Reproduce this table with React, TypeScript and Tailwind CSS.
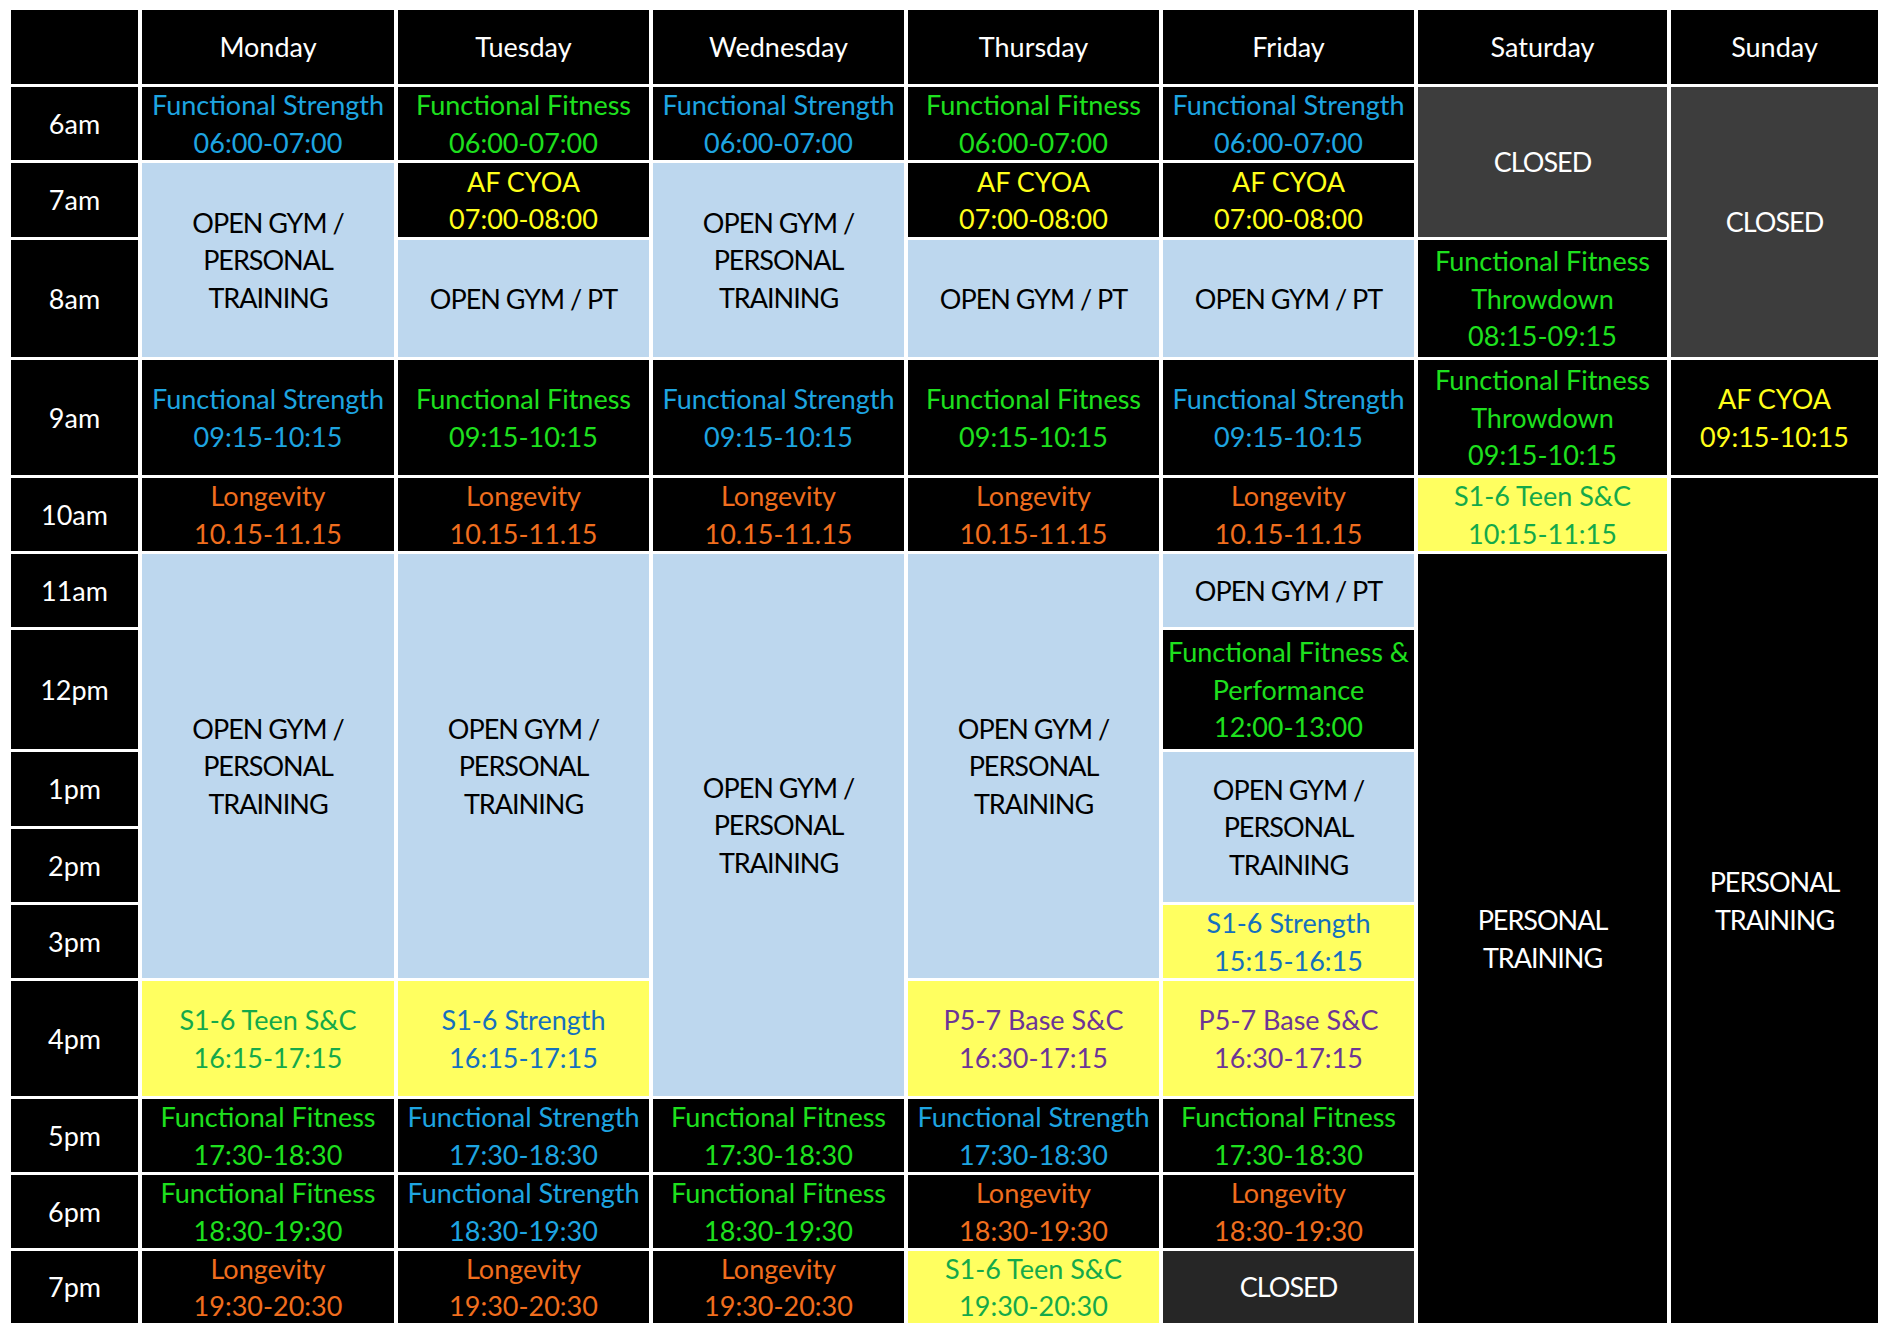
import React from "react";

type Cell = { pos: string; bg: string; fg: string; lines: string[] };

const BLK = "bg-black";
const BLUE = "bg-[#BDD7EE]";
const YEL = "bg-[#FFFF60]";
const GRAY = "bg-[#3D3D3D]";
const DARK = "bg-[#262626]";

const FS = "text-[#1EA5E1]";
const FF = "text-[#1EE01E]";
const LG = "text-[#F06E1E]";
const AF = "text-[#FFFF1A]";
const TEEN = "text-[#14A94A]";
const STR = "text-[#1570BE]";
const BASE = "text-[#6C3596]";
const WH = "text-white";
const BK = "text-black";

const OGPT = ["OPEN GYM /", "PERSONAL", "TRAINING"];
const OGPT_SHORT = ["OPEN GYM / PT"];

const cells: Cell[] = [
  // Monday
  { pos: "col-start-2 row-start-2", bg: BLK, fg: FS, lines: ["Functional Strength", "06:00-07:00"] },
  { pos: "col-start-2 row-start-3 row-span-2", bg: BLUE, fg: BK, lines: OGPT },
  { pos: "col-start-2 row-start-5", bg: BLK, fg: FS, lines: ["Functional Strength", "09:15-10:15"] },
  { pos: "col-start-2 row-start-6", bg: BLK, fg: LG, lines: ["Longevity", "10.15-11.15"] },
  { pos: "col-start-2 row-start-7 row-span-5", bg: BLUE, fg: BK, lines: OGPT },
  { pos: "col-start-2 row-start-12", bg: YEL, fg: TEEN, lines: ["S1-6 Teen S&C", "16:15-17:15"] },
  { pos: "col-start-2 row-start-13", bg: BLK, fg: FF, lines: ["Functional Fitness", "17:30-18:30"] },
  { pos: "col-start-2 row-start-14", bg: BLK, fg: FF, lines: ["Functional Fitness", "18:30-19:30"] },
  { pos: "col-start-2 row-start-15", bg: BLK, fg: LG, lines: ["Longevity", "19:30-20:30"] },
  // Tuesday
  { pos: "col-start-3 row-start-2", bg: BLK, fg: FF, lines: ["Functional Fitness", "06:00-07:00"] },
  { pos: "col-start-3 row-start-3", bg: BLK, fg: AF, lines: ["AF CYOA", "07:00-08:00"] },
  { pos: "col-start-3 row-start-4", bg: BLUE, fg: BK, lines: OGPT_SHORT },
  { pos: "col-start-3 row-start-5", bg: BLK, fg: FF, lines: ["Functional Fitness", "09:15-10:15"] },
  { pos: "col-start-3 row-start-6", bg: BLK, fg: LG, lines: ["Longevity", "10.15-11.15"] },
  { pos: "col-start-3 row-start-7 row-span-5", bg: BLUE, fg: BK, lines: OGPT },
  { pos: "col-start-3 row-start-12", bg: YEL, fg: STR, lines: ["S1-6 Strength", "16:15-17:15"] },
  { pos: "col-start-3 row-start-13", bg: BLK, fg: FS, lines: ["Functional Strength", "17:30-18:30"] },
  { pos: "col-start-3 row-start-14", bg: BLK, fg: FS, lines: ["Functional Strength", "18:30-19:30"] },
  { pos: "col-start-3 row-start-15", bg: BLK, fg: LG, lines: ["Longevity", "19:30-20:30"] },
  // Wednesday
  { pos: "col-start-4 row-start-2", bg: BLK, fg: FS, lines: ["Functional Strength", "06:00-07:00"] },
  { pos: "col-start-4 row-start-3 row-span-2", bg: BLUE, fg: BK, lines: OGPT },
  { pos: "col-start-4 row-start-5", bg: BLK, fg: FS, lines: ["Functional Strength", "09:15-10:15"] },
  { pos: "col-start-4 row-start-6", bg: BLK, fg: LG, lines: ["Longevity", "10.15-11.15"] },
  { pos: "col-start-4 row-start-7 row-span-6", bg: BLUE, fg: BK, lines: OGPT },
  { pos: "col-start-4 row-start-13", bg: BLK, fg: FF, lines: ["Functional Fitness", "17:30-18:30"] },
  { pos: "col-start-4 row-start-14", bg: BLK, fg: FF, lines: ["Functional Fitness", "18:30-19:30"] },
  { pos: "col-start-4 row-start-15", bg: BLK, fg: LG, lines: ["Longevity", "19:30-20:30"] },
  // Thursday
  { pos: "col-start-5 row-start-2", bg: BLK, fg: FF, lines: ["Functional Fitness", "06:00-07:00"] },
  { pos: "col-start-5 row-start-3", bg: BLK, fg: AF, lines: ["AF CYOA", "07:00-08:00"] },
  { pos: "col-start-5 row-start-4", bg: BLUE, fg: BK, lines: OGPT_SHORT },
  { pos: "col-start-5 row-start-5", bg: BLK, fg: FF, lines: ["Functional Fitness", "09:15-10:15"] },
  { pos: "col-start-5 row-start-6", bg: BLK, fg: LG, lines: ["Longevity", "10.15-11.15"] },
  { pos: "col-start-5 row-start-7 row-span-5", bg: BLUE, fg: BK, lines: OGPT },
  { pos: "col-start-5 row-start-12", bg: YEL, fg: BASE, lines: ["P5-7 Base S&C", "16:30-17:15"] },
  { pos: "col-start-5 row-start-13", bg: BLK, fg: FS, lines: ["Functional Strength", "17:30-18:30"] },
  { pos: "col-start-5 row-start-14", bg: BLK, fg: LG, lines: ["Longevity", "18:30-19:30"] },
  { pos: "col-start-5 row-start-15", bg: YEL, fg: TEEN, lines: ["S1-6 Teen S&C", "19:30-20:30"] },
  // Friday
  { pos: "col-start-6 row-start-2", bg: BLK, fg: FS, lines: ["Functional Strength", "06:00-07:00"] },
  { pos: "col-start-6 row-start-3", bg: BLK, fg: AF, lines: ["AF CYOA", "07:00-08:00"] },
  { pos: "col-start-6 row-start-4", bg: BLUE, fg: BK, lines: OGPT_SHORT },
  { pos: "col-start-6 row-start-5", bg: BLK, fg: FS, lines: ["Functional Strength", "09:15-10:15"] },
  { pos: "col-start-6 row-start-6", bg: BLK, fg: LG, lines: ["Longevity", "10.15-11.15"] },
  { pos: "col-start-6 row-start-7", bg: BLUE, fg: BK, lines: OGPT_SHORT },
  { pos: "col-start-6 row-start-8", bg: BLK, fg: FF, lines: ["Functional Fitness &", "Performance", "12:00-13:00"] },
  { pos: "col-start-6 row-start-9 row-span-2", bg: BLUE, fg: BK, lines: OGPT },
  { pos: "col-start-6 row-start-11", bg: YEL, fg: STR, lines: ["S1-6 Strength", "15:15-16:15"] },
  { pos: "col-start-6 row-start-12", bg: YEL, fg: BASE, lines: ["P5-7 Base S&C", "16:30-17:15"] },
  { pos: "col-start-6 row-start-13", bg: BLK, fg: FF, lines: ["Functional Fitness", "17:30-18:30"] },
  { pos: "col-start-6 row-start-14", bg: BLK, fg: LG, lines: ["Longevity", "18:30-19:30"] },
  { pos: "col-start-6 row-start-15", bg: DARK, fg: WH, lines: ["CLOSED"] },
  // Saturday
  { pos: "col-start-7 row-start-2 row-span-2", bg: GRAY, fg: WH, lines: ["CLOSED"] },
  { pos: "col-start-7 row-start-4", bg: BLK, fg: FF, lines: ["Functional Fitness", "Throwdown", "08:15-09:15"] },
  { pos: "col-start-7 row-start-5", bg: BLK, fg: FF, lines: ["Functional Fitness", "Throwdown", "09:15-10:15"] },
  { pos: "col-start-7 row-start-6", bg: YEL, fg: TEEN, lines: ["S1-6 Teen S&C", "10:15-11:15"] },
  { pos: "col-start-7 row-start-7 row-span-9", bg: BLK, fg: WH, lines: ["PERSONAL", "TRAINING"] },
  // Sunday
  { pos: "col-start-8 row-start-2 row-span-3", bg: GRAY, fg: WH, lines: ["CLOSED"] },
  { pos: "col-start-8 row-start-5", bg: BLK, fg: AF, lines: ["AF CYOA", "09:15-10:15"] },
  { pos: "col-start-8 row-start-6 row-span-10", bg: BLK, fg: WH, lines: ["PERSONAL", "TRAINING"] },
];

const days = ["Monday", "Tuesday", "Wednesday", "Thursday", "Friday", "Saturday", "Sunday"];
const times = ["6am", "7am", "8am", "9am", "10am", "11am", "12pm", "1pm", "2pm", "3pm", "4pm", "5pm", "6pm", "7pm"];

function Box({ className, lines }: { className: string; lines: string[] }) {
  const upper = lines.every((l) => l === l.toUpperCase() && /[A-Z]{3}/.test(l));
  return (
    <div
      className={`flex flex-col items-center justify-center text-center overflow-visible ${
        upper ? "tracking-[-1px]" : ""
      } ${className}`}
    >
      {lines.map((l, i) => (
        <div key={i} className="whitespace-nowrap">
          {l}
        </div>
      ))}
    </div>
  );
}

export default function App() {
  return (
    <div
      className="min-h-screen bg-white pt-[10px] pl-[11px] text-[27px] leading-[37.5px]"
      style={{ fontFamily: "Lato, 'Open Sans', sans-serif" }}
    >
      <div className="grid w-max gap-x-[4px] gap-y-[3px] grid-cols-[127px_252px_251px_251px_251px_251px_249px_207px] grid-rows-[74px_73px_74px_117px_115px_73px_73px_119px_74px_73px_73px_115px_73px_73px_72px]">
        <div className="col-start-1 row-start-1 bg-black" />
        {days.map((d) => (
          <Box key={d} className="row-start-1 bg-black text-white" lines={[d]} />
        ))}
        {times.map((t) => (
          <Box key={t} className="col-start-1 bg-black text-white" lines={[t]} />
        ))}
        {cells.map((c, i) => (
          <Box key={i} className={`${c.pos} ${c.bg} ${c.fg}`} lines={c.lines} />
        ))}
      </div>
    </div>
  );
}
